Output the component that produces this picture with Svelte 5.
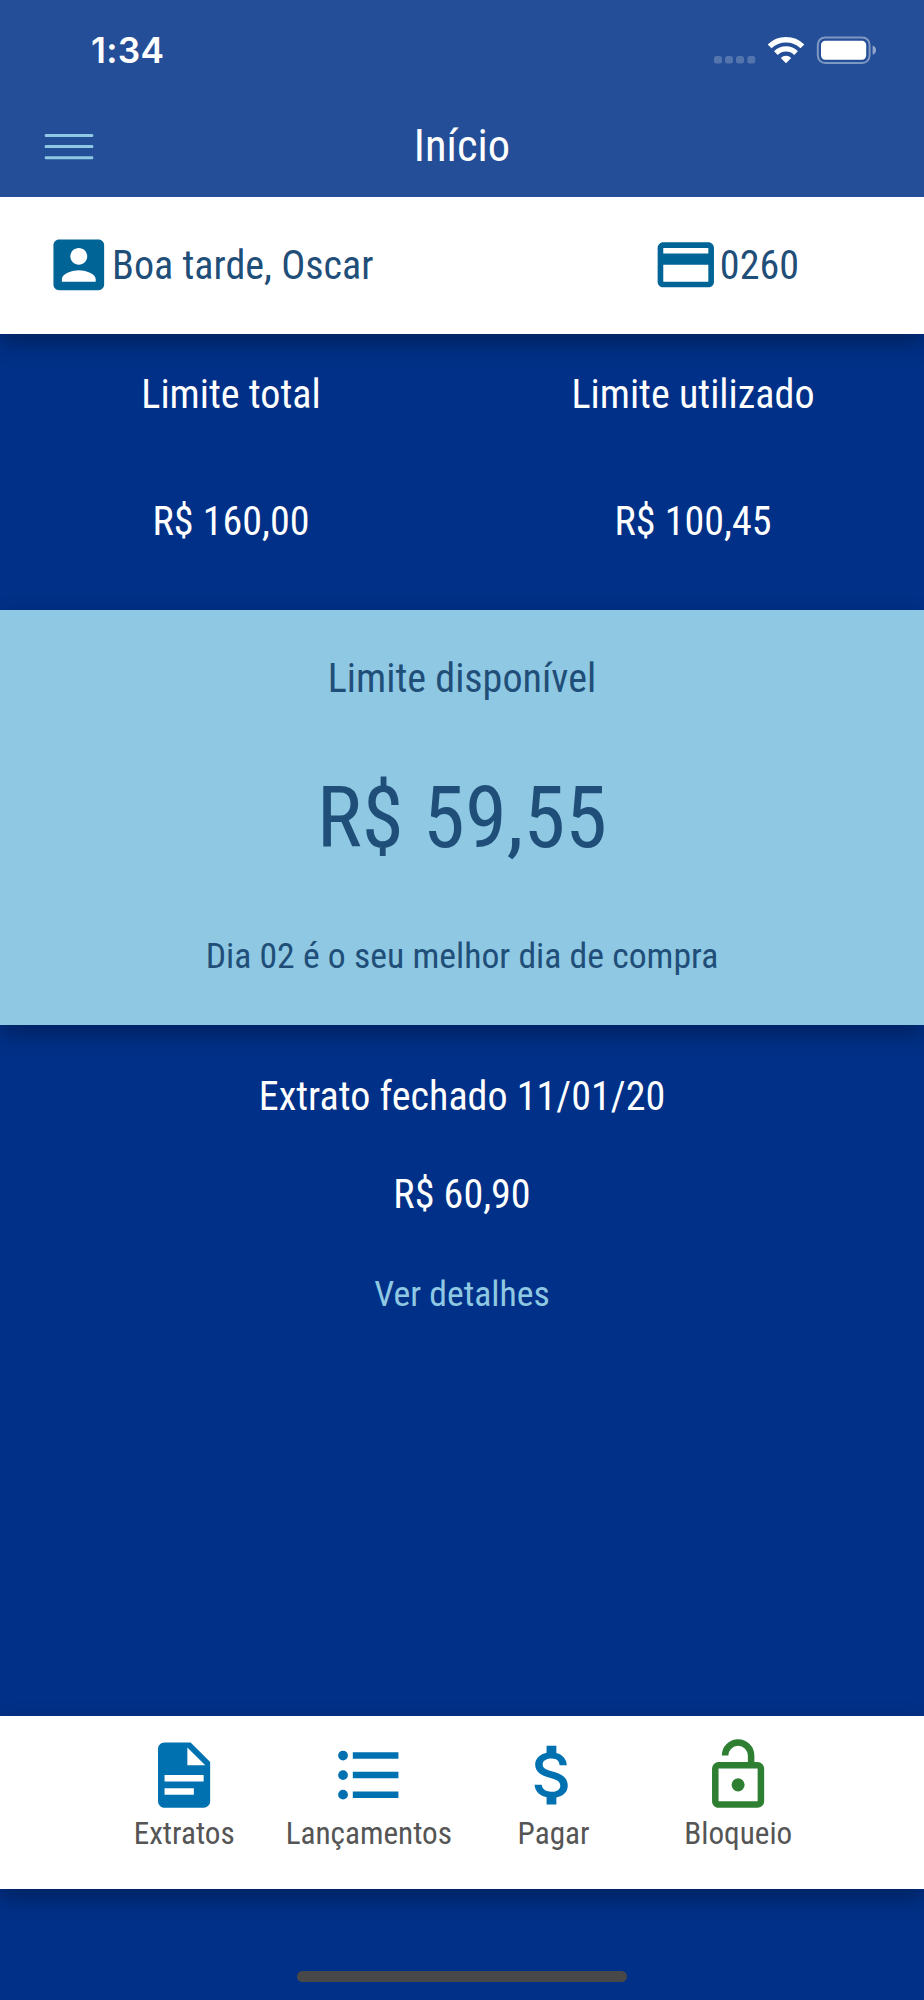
<script>
  const tabs = [
    {
      label: 'Extratos',
      color: '#0071b0',
      path: 'M13,9H18.5L13,3.5V9M6,2H14L20,8V20A2,2 0 0,1 18,22H6C4.89,22 4,21.1 4,20V4C4,2.89 4.89,2 6,2M15,18V16H6V18H15M18,14V12H6V14H18Z'
    },
    {
      label: 'Lançamentos',
      color: '#0071b0',
      path: 'M7,5H21V7H7V5M7,13V11H21V13H7M4,4.5A1.5,1.5 0 0,1 5.5,6A1.5,1.5 0 0,1 4,7.5A1.5,1.5 0 0,1 2.5,6A1.5,1.5 0 0,1 4,4.5M4,10.5A1.5,1.5 0 0,1 5.5,12A1.5,1.5 0 0,1 4,13.5A1.5,1.5 0 0,1 2.5,12A1.5,1.5 0 0,1 4,10.5M7,19V17H21V19H7M4,16.5A1.5,1.5 0 0,1 5.5,18A1.5,1.5 0 0,1 4,19.5A1.5,1.5 0 0,1 2.5,18A1.5,1.5 0 0,1 4,16.5Z'
    },
    {
      label: 'Pagar',
      color: '#0071b0',
      path: 'M11.8 10.9c-2.27-.59-3-1.2-3-2.15 0-1.09 1.01-1.85 2.7-1.85 1.78 0 2.44.85 2.5 2.1h2.21c-.07-1.72-1.12-3.3-3.21-3.81V3h-3v2.16c-1.94.42-3.5 1.68-3.5 3.61 0 2.31 1.91 3.46 4.7 4.13 2.5.6 3 1.48 3 2.41 0 .69-.49 1.79-2.7 1.79-2.06 0-2.87-.92-2.98-2.1h-2.2c.12 2.19 1.76 3.42 3.68 3.83V21h3v-2.15c1.95-.37 3.5-1.5 3.5-3.55 0-2.84-2.43-3.81-4.7-4.4z'
    },
    {
      label: 'Bloqueio',
      color: '#2f7f33',
      path: 'M18,20V10H6V20H18M18,8A2,2 0 0,1 20,10V20C20,21.1 19.1,22 18,22H6C4.89,22 4,21.1 4,20V10A2,2 0 0,1 6,8H15V6A3,3 0 0,0 12,3A3,3 0 0,0 9,6H7A5,5 0 0,1 12,1A5,5 0 0,1 17,6V8H18M12,17A2,2 0 0,1 10,15A2,2 0 0,1 12,13A2,2 0 0,1 14,15A2,2 0 0,1 12,17Z'
    }
  ];
  const limits = [
    { label: 'Limite total', value: 'R$ 160,00' },
    { label: 'Limite utilizado', value: 'R$ 100,45' }
  ];
</script>

<div class="screen">
  <header>
    <div class="status">
      <span class="time">1:34</span>
      <svg class="indicators" width="164" height="30" viewBox="0 0 164 30">
        <g fill="#fff" fill-opacity=".22">
          <rect x="2" y="20" width="8" height="7.5" rx="2.5" />
          <rect x="13" y="20" width="8" height="7.5" rx="2.5" />
          <rect x="24" y="20" width="8" height="7.5" rx="2.5" />
          <rect x="35.3" y="20" width="8" height="7.5" rx="2.5" />
        </g>
        <g fill="none" stroke="#fff">
          <path d="M57.6 10.4A23.4 23.4 0 0 1 90.4 10.4" stroke-width="5.4" />
          <path d="M63.9 17.1A14.4 14.4 0 0 1 84.1 17.1" stroke-width="5.2" />
        </g>
        <path d="M74 27.2L68.8 22A7.4 7.4 0 0 1 79.2 22Z" fill="#fff" />
        <rect x="105.8" y="1.4" width="51.8" height="25.6" rx="7.4" fill="none" stroke="#fff" stroke-opacity=".42" stroke-width="2" />
        <rect x="109" y="4.8" width="45.2" height="19" rx="4.2" fill="#fff" />
        <path d="M160.6 9.6Q164 11 164 14.2T160.6 18.8Z" fill="#fff" fill-opacity=".5" />
      </svg>
    </div>
    <div class="nav">
      <svg class="menu" width="50" height="28" viewBox="0 0 50 28">
        <g fill="#8fc8e2">
          <rect x=".7" y="1" width="48.6" height="3" rx="1.2" />
          <rect x=".7" y="12.1" width="48.6" height="3" rx="1.2" />
          <rect x=".7" y="23.2" width="48.6" height="3" rx="1.2" />
        </g>
      </svg>
      <h1>Início</h1>
    </div>
  </header>

  <section class="user">
    <div class="entry">
      <svg width="67.6" height="67.6" viewBox="0 0 24 24" fill="#006496">
        <path d="M3 5v14c0 1.1.89 2 2 2h14c1.1 0 2-.9 2-2V5c0-1.1-.9-2-2-2H5c-1.11 0-2 .9-2 2zm12 4c0 1.66-1.34 3-3 3s-3-1.34-3-3 1.34-3 3-3 3 1.34 3 3zm-9 8c0-2 4-3.1 6-3.1s6 1.1 6 3.1v1H6v-1z" />
      </svg>
      <span>Boa tarde, Oscar</span>
    </div>
    <div class="entry card">
      <svg width="67.6" height="67.6" viewBox="0 0 24 24" fill="#006496">
        <path d="M20 4H4c-1.11 0-1.99.89-1.99 2L2 18c0 1.11.89 2 2 2h16c1.11 0 2-.89 2-2V6c0-1.11-.89-2-2-2zm0 14H4v-6h16v6zm0-10H4V6h16v2z" />
      </svg>
      <span>0260</span>
    </div>
  </section>

  <section class="limits">
    {#each limits as l}
      <div class="limit">
        <span>{l.label}</span>
        <span>{l.value}</span>
      </div>
    {/each}
  </section>

  <section class="available">
    <span class="caption">Limite disponível</span>
    <strong>R$ 59,55</strong>
    <span class="hint">Dia 02 é o seu melhor dia de compra</span>
  </section>

  <section class="statement">
    <span>Extrato fechado 11/01/20</span>
    <span>R$ 60,90</span>
    <span class="link">Ver detalhes</span>
  </section>

  <nav class="tabs">
    {#each tabs as t}
      <div class="tab">
        <svg width="78.2" height="78.2" viewBox="0 0 24 24" fill={t.color}><path d={t.path} /></svg>
        <span>{t.label}</span>
      </div>
    {/each}
  </nav>

  <footer><div class="home"></div></footer>
</div>

<style>
  :global(body) { margin: 0; background: #003087; }
  .screen {
    width: 924px;
    height: 2000px;
    display: flex;
    flex-direction: column;
    overflow: hidden;
    background: #003087;
    color: #fff;
    font-family: 'Roboto Condensed', Roboto, sans-serif;
    font-stretch: 75%;
    font-size: 40.1px;
    line-height: 48px;
    white-space: nowrap;
  }
  svg { display: block; flex: none; }
  header { height: 196.6px; background: #244e97; flex: none; z-index: 1; }
  .status {
    height: 100px;
    box-sizing: border-box;
    padding: 26px 48px 0 91px;
    display: flex;
    justify-content: space-between;
  }
  .time { font: 600 35.3px/49px Inter, sans-serif; font-stretch: 100%; letter-spacing: .3px; }
  .indicators { margin-top: 10px; }
  .nav {
    height: 92px;
    display: grid;
    grid-template-columns: 50px 1fr 50px;
    align-items: center;
    padding: 0 44px;
  }
  .menu { margin-top: 1px; }
  h1 { margin: 0; text-align: center; font-weight: 400; font-size: 44.5px; line-height: 52px; }
  .user {
    height: 137.6px;
    flex: none;
    display: flex;
    align-items: center;
    justify-content: space-between;
    padding: 0 125px 1.4px 44.5px;
    box-sizing: border-box;
    background: #fff;
    color: #1f4e79;
    box-shadow: 0 9px 20.7px rgba(0, 0, 0, .3);
  }
  .entry { display: flex; align-items: center; }
  .entry span { padding-top: 3px; }
  .limits { height: 276px; flex: none; display: grid; grid-template-columns: 1fr 1fr; }
  .limit {
    display: flex;
    flex-direction: column;
    align-items: center;
    gap: 79px;
    padding-top: 37px;
  }
  .available {
    height: 415px;
    box-sizing: border-box;
    flex: none;
    display: flex;
    flex-direction: column;
    align-items: center;
    padding-top: 45px;
    background: #8fc8e2;
    color: #1f4e79;
    box-shadow: 0 9px 20.7px rgba(0, 0, 0, .3);
  }
  strong { font-weight: 400; font-size: 84.8px; line-height: 100px; margin-top: 65px; }
  .hint { font-size: 35.7px; margin-top: 64px; }
  .statement {
    height: 691px;
    box-sizing: border-box;
    flex: none;
    display: flex;
    flex-direction: column;
    align-items: center;
    gap: 50px;
    padding-top: 48px;
  }
  .link { font-size: 35.7px; color: #8fc8e2; margin-top: 1px; }
  .tabs {
    height: 172.6px;
    flex: none;
    display: grid;
    grid-template-columns: repeat(4, 184.7px);
    justify-content: center;
    padding-right: 1.6px;
    background: #fff;
    color: #555;
    font-size: 31.2px;
    line-height: 38px;
    box-shadow: 0 9px 20.7px rgba(0, 0, 0, .3);
  }
  .tab { display: flex; flex-direction: column; align-items: center; gap: 1px; padding-top: 20px; }
  footer { display: flex; justify-content: center; padding-top: 82px; }
  .home { width: 330px; height: 11px; border-radius: 6px; background: #484848; }
</style>
